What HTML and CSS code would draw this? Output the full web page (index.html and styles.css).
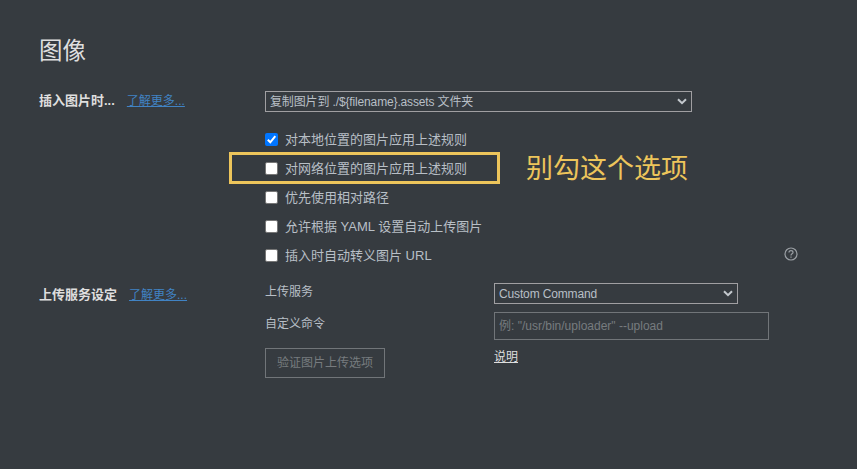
FILE: index.html
```html
<!DOCTYPE html>
<html lang="zh-CN">
<head>
<meta charset="utf-8">
<title>图像</title>
<link rel="stylesheet" href="styles.css">
</head>
<body>
<main class="page">
  <h1 class="title">图像</h1>
  <section class="section insert">
    <div class="heading"><strong>插入图片时...</strong><a class="more" href="#">了解更多...</a></div>
    <div class="body">
      <div class="select wide"><span>复制图片到 ./${filename}.assets 文件夹</span><svg class="chevron" viewBox="0 0 10 7"><path d="M1 1.2 5 5.2 9 1.2"/></svg></div>
      <div class="options">
        <label class="option"><span class="box checked"><svg viewBox="0 0 13 13"><path d="M2.8 6.8 5.3 9.3 10.3 3.2"/></svg></span><span>对本地位置的图片应用上述规则</span></label>
        <label class="option marked"><span class="box"></span><span>对网络位置的图片应用上述规则</span><span class="outline"></span><span class="note">别勾这个选项</span></label>
        <label class="option"><span class="box"></span><span>优先使用相对路径</span></label>
        <label class="option"><span class="box"></span><span>允许根据 YAML 设置自动上传图片</span></label>
        <label class="option"><span class="box"></span><span>插入时自动转义图片 URL</span><svg class="help" viewBox="0 0 14 14"><circle cx="7" cy="7" r="6"/><path d="M5 5.5C5 4.3 5.8 3.6 7 3.6s2 .7 2 1.8c0 1.4-2 1.5-2 3M7 9.6v1.2"/></svg></label>
      </div>
    </div>
  </section>
  <section class="section upload">
    <div class="heading"><strong>上传服务设定</strong><a class="more" href="#">了解更多...</a></div>
    <div class="fields">
      <span class="name service">上传服务</span>
      <div class="select"><span>Custom Command</span><svg class="chevron" viewBox="0 0 10 7"><path d="M1 1.2 5 5.2 9 1.2"/></svg></div>
      <span class="name command">自定义命令</span>
      <div class="input">例: "/usr/bin/uploader" --upload</div>
      <button class="verify" disabled>验证图片上传选项</button>
      <a class="docs" href="#">说明</a>
    </div>
  </section>
</main>
</body>
</html>
```
FILE: styles.css
```css
* { box-sizing: border-box; }
body {
  margin: 0;
  background: #363b40;
  color: #b8bfc6;
  font: 13px/20px "Liberation Sans", "Noto Sans CJK SC", sans-serif;
}
.page { height: 469px; padding: 36px 0 0 39px; overflow: hidden; }
.title { margin: 0; height: 55px; font-size: 23.5px; line-height: 31px; font-weight: 400; color: #dedede; }
.section { display: grid; grid-template-columns: 226px 1fr; }
.insert { height: 192px; }
.heading { display: flex; height: 20px; line-height: 20px; white-space: nowrap; }
.heading strong { color: #dedede; }
.heading .more { margin-left: 12px; font-size: 12px; line-height: 20px; color: #4183c4; }
.upload .heading { margin-top: 2px; }
.select {
  display: flex; align-items: center; justify-content: space-between;
  width: 244px; height: 21px; padding: 0 4px;
  border: 1px solid #a09fa2; font-size: 12px; line-height: 19px; letter-spacing: -0.14px;
}
.select span { position: relative; top: 1px; }
.select.wide { width: 427px; }
.chevron { width: 10px; height: 7px; fill: none; stroke: #c3c8cd; stroke-width: 2; }
.options { margin-top: 13px; }
.option { display: flex; align-items: center; height: 29px; position: relative; white-space: nowrap; }
.box { width: 13px; height: 13px; margin-right: 7px; border: 1px solid #767676; border-radius: 2px; background: #fff; }
.box.checked { border: 0; background: #0075ff; }
.box svg { display: block; width: 13px; height: 13px; fill: none; stroke: #fff; stroke-width: 2; }
.outline { position: absolute; left: -36px; top: -2px; width: 271px; height: 32px; border: 3px solid #edc55b; }
.note { position: absolute; left: 261px; top: -3px; font-size: 27px; line-height: 36px; color: #edc55b; }
.help { width: 14px; height: 14px; margin: -3px 0 0 352px; fill: none; stroke: #9a9fa4; stroke-width: 1.2; }
.fields {
  display: grid; grid-template-columns: 229px 275px; grid-template-rows: 29px 36px 30px;
  align-items: start; align-content: start; font-size: 12px;
}
.service { margin-top: -1px; }
.command { margin-top: 2px; }
.input { height: 28px; padding: 0 4px; border: 1px solid #717579; line-height: 26px; color: #777b7f; }
.verify {
  width: 120px; height: 30px; padding: 0; border: 1px solid #717579; border-radius: 0;
  background: transparent; color: #777b7f; font: inherit;
}
.docs { justify-self: start; margin-top: -1px; color: #dedede; }
```
